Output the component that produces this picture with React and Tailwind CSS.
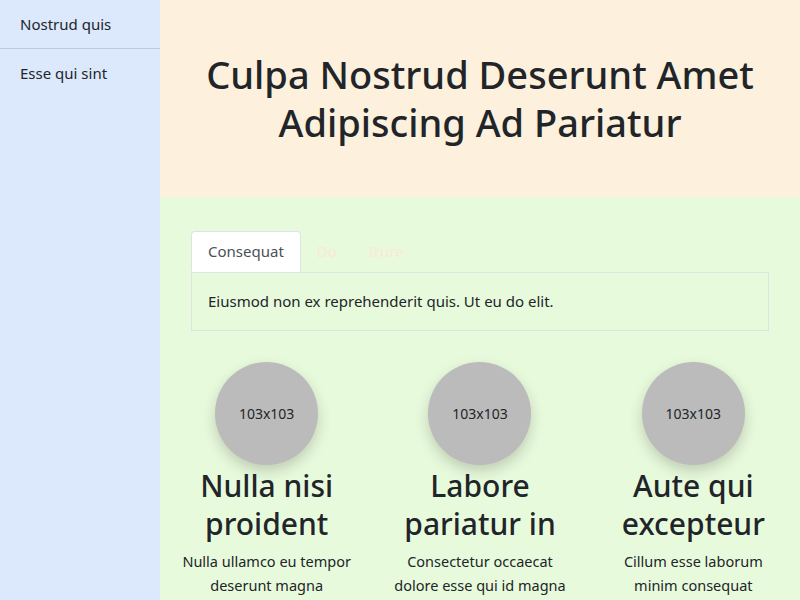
import React, { useState } from 'react';

const cards = [
  { title: 'Nulla nisi proident', text: 'Nulla ullamco eu tempor deserunt magna' },
  { title: 'Labore pariatur in', text: 'Consectetur occaecat dolore esse qui id magna' },
  { title: 'Aute qui excepteur', text: 'Cillum esse laborum minim consequat' },
];

const tabs = ['Consequat', 'Do', 'Irure'];

const App = () => {
  const [active, setActive] = useState(0);

  return (
    <div className="flex min-h-screen font-['Noto_Sans',sans-serif] text-[#212529]">
      <aside className="w-[160px] shrink-0 bg-[#dce8fc]">
        <div className="px-5 py-3 text-[15px] leading-6 border-b border-[#bfcbdc]">Nostrud quis</div>
        <div className="px-5 py-3 text-[15px] leading-6">Esse qui sint</div>
      </aside>

      <main className="flex-1 overflow-hidden">
        <header className="h-[197px] bg-[#fdf0dc] flex items-center justify-center text-center px-8">
          <h1 className="text-[38px] leading-[48px] font-medium -mt-[2px]">Culpa Nostrud Deserunt Amet Adipiscing Ad Pariatur</h1>
        </header>

        <section className="bg-[#e8fadc] px-[31px] pt-[34px] pb-10">
          <div className="flex border-b border-[#dee2e6] text-[15px]">
            {tabs.map((t, i) => (
              <button key={t} onClick={() => setActive(i)}
                className={i === active
                  ? "h-[41px] px-4 -mb-px bg-white border border-[#dee2e6] border-b-white rounded-t text-[#495057]"
                  : "h-[41px] px-4 text-[#fde7d6]"}>
                {t}
              </button>
            ))}
          </div>
          <div className="border border-t-0 border-[#dee2e6] h-[58px] px-4 flex items-center text-[15px]">
            Eiusmod non ex reprehenderit quis. Ut eu do elit.
          </div>

          <div className="grid grid-cols-3 -mx-[31px] mt-[31px] text-center">
            {cards.map(c => (
              <div key={c.title} className="flex flex-col items-center px-3">
                <div className="w-[103px] h-[103px] rounded-full bg-[#bbbbbb] shadow-[0_6px_14px_rgba(0,0,0,0.18)] flex items-center justify-center text-[14px]">103x103</div>
                <h2 className="text-[30px] leading-[38px] font-medium mt-[2px] px-3">{c.title}</h2>
                <p className="w-[180px] text-[14.5px] leading-6 mt-[6px]">{c.text}</p>
              </div>
            ))}
          </div>
        </section>
      </main>
    </div>
  );
};

export default App;
